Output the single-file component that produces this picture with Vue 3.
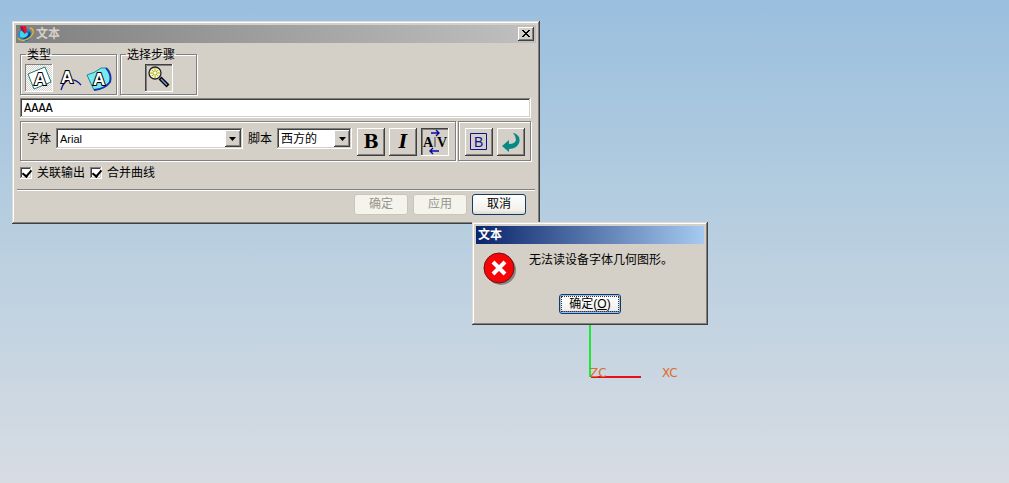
<script setup>
import { ref } from 'vue'

const content = ref('AAAA')
const font = ref('Arial')
const script = ref('西方的')
const associative = ref(true)
const joinCurves = ref(true)
</script>

<template>
  <main class="desktop">
    <svg class="axes" width="100" height="64" viewBox="0 0 100 64" aria-label="坐标轴">
      <path d="M2 0V56" stroke="#20e830" stroke-width="2" />
      <path d="M3 56H53" stroke="#e81018" stroke-width="2" />
      <text x="2" y="56">ZC</text>
      <text x="74" y="56">XC</text>
    </svg>

    <section class="window editor" aria-label="文本">
      <header class="titlebar inactive">
        <svg class="logo" width="18" height="16" viewBox="0 0 18 16" aria-hidden="true">
          <circle cx="8" cy="9" r="6.500" fill="#1686d8" />
          <path d="M3 6Q5 3 9 4L11 9Q8 13 3 11Z" fill="#39d8ea" />
          <path d="M4 13Q9 17 13 12Q15 8 12 5L11 9Q9 12 4 13Z" fill="#0746a8" />
          <path d="M3 0L9 0L10 6L8 8Z" fill="#e5142c" />
          <path d="M3 0L4 4L8 8L6 2Z" fill="#8d1644" />
          <path d="M13 2Q17 3 16 7Q14 12 8 14Q3 15 1 12" fill="none" stroke="#f1b622" stroke-width="1.3" />
        </svg>
        <h1>文本</h1>
        <button class="close" type="button" aria-label="关闭">
          <svg width="8" height="8" viewBox="0 0 8 8" shape-rendering="crispEdges"><path d="M0 0h2v1h1v1h2v-1h1v-1h2v1h-1v1h-1v1h-1v1h1v1h1v1h1v1h-2v-1h-1v-1h-2v1h-1v1h-2v-1h1v-1h1v-1h1v-1h-1v-1h-1v-1h-1z" fill="#000" /></svg>
        </button>
      </header>

      <div class="groups">
        <fieldset class="types">
          <legend>类型</legend>
          <button class="tool flat pressed" type="button" aria-label="平面文本">
            <svg width="26" height="26" viewBox="0 0 26 26">
              <path d="M2 9L19 2L25 17L8 24Z" fill="#fff" stroke="#187c78" />
              <text class="outlined" x="8" y="20">A</text>
            </svg>
          </button>
          <button class="tool flat" type="button" aria-label="曲线上文本">
            <svg width="26" height="26" viewBox="0 0 26 26">
              <path d="M5 25Q8 15 14 15Q20 14 25 20" fill="none" stroke="#14148c" stroke-width="1.3" />
              <text class="outlined" x="5" y="18">A</text>
            </svg>
          </button>
          <button class="tool flat" type="button" aria-label="面上文本">
            <svg width="28" height="26" viewBox="0 0 28 26">
              <path d="M2 10Q10 8 16 3L21 3Q27 9 25 17Q20 24 9 25Q6 19 2 10Z" fill="#78e9f0" stroke="#168a98" />
              <path d="M21 3Q27 9 25 17Q20 24 9 25" fill="none" stroke="#1538a8" stroke-width="2" />
              <text class="outlined" x="8" y="20">A</text>
            </svg>
          </button>
        </fieldset>

        <fieldset class="steps">
          <legend>选择步骤</legend>
          <button class="tool flat pressed plain" type="button" aria-label="选择">
            <svg width="26" height="26" viewBox="0 0 26 26">
              <path d="M14 13L22 21" stroke="#000" stroke-width="4" />
              <path d="M15 14L21 20" stroke="#7d92dc" stroke-width="1.500" />
              <circle cx="9" cy="8" r="6" fill="#f4f3c4" stroke="#222" stroke-width="1.3" />
              <path d="M9 3V13M4 8H14M6 5L12 11M12 5L6 11" stroke="#b9b32e" />
              <path d="M8 7h2v2h-2z" fill="#fff" />
            </svg>
          </button>
        </fieldset>
      </div>

      <input v-model="content" class="content sunken" type="text" aria-label="文本内容">

      <div class="format">
        <div class="panel options">
          <label for="font">字体</label>
          <div class="combo font-combo sunken">
            <select id="font" v-model="font"><option>Arial</option></select>
            <span class="arrow" aria-hidden="true"><svg width="7" height="4" viewBox="0 0 7 4"><path d="M0 0h7L3.5 4z" /></svg></span>
          </div>
          <label for="script">脚本</label>
          <div class="combo script-combo sunken">
            <select id="script" v-model="script"><option>西方的</option></select>
            <span class="arrow" aria-hidden="true"><svg width="7" height="4" viewBox="0 0 7 4"><path d="M0 0h7L3.5 4z" /></svg></span>
          </div>
          <div class="tools">
            <button class="tool letter" type="button" aria-label="粗体">B</button>
            <button class="tool letter italic" type="button" aria-label="斜体">I</button>
            <button class="tool pressed" type="button" aria-label="字距">
              <svg width="26" height="26" viewBox="0 0 26 26">
                <path d="M9 4H17M14 1L17 4L14 7M17 22H8M11 19L8 22L11 25" fill="none" stroke="#0808a0" stroke-width="1.4" />
                <path d="M13 8V18" stroke="#888" stroke-width="2" />
                <text class="kern" x="1" y="18">A</text>
                <text class="kern" x="15" y="18">V</text>
              </svg>
            </button>
          </div>
        </div>
        <div class="panel tools extra">
          <button class="tool" type="button" aria-label="文本框">
            <svg width="26" height="26" viewBox="0 0 26 26">
              <path d="M4.500 4.500H20.500V20.500H4.500Z" fill="none" stroke="#10108c" />
              <text class="boxed" x="8" y="18">B</text>
            </svg>
          </button>
          <button class="tool" type="button" aria-label="重置">
            <svg width="26" height="26" viewBox="0 0 26 26">
              <path d="M15 4Q18 4 21 8Q23 14 18 18Q15 20 11 20V23L4 17L11 11V15Q17 15 18 11Q18 7 15 4Z" fill="#078985" />
            </svg>
          </button>
        </div>
      </div>

      <div class="checks">
        <label><input v-model="associative" type="checkbox"><span>关联输出</span></label>
        <label><input v-model="joinCurves" type="checkbox"><span>合并曲线</span></label>
      </div>

      <footer class="actions">
        <button class="push" type="button" disabled>确定</button>
        <button class="push" type="button" disabled>应用</button>
        <button class="push" type="button">取消</button>
      </footer>
    </section>

    <section class="window alert" role="alertdialog" aria-label="文本" aria-describedby="message">
      <header class="titlebar active"><h2>文本</h2></header>
      <div class="message">
        <svg width="34" height="34" viewBox="0 0 34 34" aria-hidden="true">
          <circle cx="18" cy="18" r="15" fill="#858585" />
          <circle cx="16" cy="16" r="15" fill="#f50505" stroke="#751010" />
          <path d="M10 10L22 22M22 10L10 22" stroke="#fff" stroke-width="4" />
        </svg>
        <p id="message">无法读设备字体几何图形。</p>
      </div>
      <button class="push focused" type="button"><span>确定(<u>O</u>)</span></button>
    </section>
  </main>
</template>

<style>
body {
  margin: 0;
}
</style>

<style scoped>
* {
  box-sizing: border-box;
}

.desktop {
  position: relative;
  min-height: 100vh;
  overflow: hidden;
  background: linear-gradient(#9abfde, #b9cfe0 50%, #d7dce3);
  color: #000;
  font: 12px/16px "Liberation Sans", "Noto Sans CJK SC", sans-serif;
}

button,
input,
select {
  margin: 0;
  color: inherit;
  font: inherit;
}

svg {
  display: block;
  flex: none;
}

.axes {
  position: absolute;
  top: 321px;
  left: 588px;
}

.axes text {
  fill: #df6a2a;
  font: 12px "DejaVu Sans", sans-serif;
}

.window {
  position: absolute;
  padding: 4px;
  background: #d4d0c8;
  box-shadow: inset -1px -1px #404040, inset 1px 1px #dfdcd5, inset -2px -2px #808080, inset 2px 2px #fff;
}

.editor {
  top: 21px;
  left: 12px;
  width: 528px;
}

.alert {
  top: 222px;
  left: 472px;
  width: 236px;
  padding-bottom: 11px;
}

.titlebar {
  display: flex;
  align-items: center;
  height: 18px;
  padding: 0 2px 0 1px;
}

.titlebar h1,
.titlebar h2 {
  flex: 1;
  margin: 0;
  font-size: 12px;
  line-height: 18px;
}

.inactive {
  gap: 1px;
  background: linear-gradient(90deg, #808080, #c0c0c0);
  color: #d4d0c8;
}

.active {
  padding-left: 2px;
  background: linear-gradient(90deg, #0a246a, #a6caf0);
  color: #fff;
}

.close {
  display: grid;
  place-items: center;
  width: 16px;
  height: 14px;
  padding: 0 1px 1px 0;
  border: 0;
  background: #d4d0c8;
  box-shadow: inset -1px -1px #404040, inset 1px 1px #fff, inset -2px -2px #808080;
}

.groups {
  display: flex;
  gap: 3px;
  padding: 3px 4px 0;
}

fieldset {
  display: flex;
  min-width: 0;
  height: 49px;
  margin: 0;
  padding: 2px 4px 0;
  border: 1px solid #808080;
  box-shadow: 1px 1px #fff, inset 1px 1px #fff;
}

legend {
  margin-left: 1px;
  padding: 2px 1px 0;
  line-height: 14px;
}

.types {
  gap: 2px;
  width: 97px;
}

.steps {
  justify-content: center;
  width: 77px;
}

.tool {
  display: grid;
  flex: none;
  place-items: center;
  width: 28px;
  height: 28px;
  padding: 0;
  border: 0;
  background: #d4d0c8;
  box-shadow: inset -1px -1px #404040, inset 1px 1px #fff, inset -2px -2px #808080;
}

.tool.flat {
  box-shadow: none;
}

.tool.pressed {
  background: repeating-conic-gradient(#fff 0 25%, #d4d0c8 0 50%) 0 0 / 2px 2px;
  box-shadow: inset -1px -1px #fff, inset 1px 1px #808080;
}

.tool.plain,
.tools .tool.pressed {
  background: #d4d0c8;
}

.tool.plain,
.tools .tool.pressed {
  box-shadow: inset -1px -1px #fff, inset 1px 1px #404040, inset 2px 2px #808080;
}

.outlined {
  fill: #fff;
  stroke: #000;
  stroke-width: 2px;
  paint-order: stroke;
  font: bold 17px "Liberation Sans", sans-serif;
}

.letter {
  font: bold 18px/26px "DejaVu Serif", serif;
}

.italic {
  font-style: italic;
}

.kern {
  font: bold 14px "Liberation Serif", serif;
}

.boxed {
  fill: #10108c;
  font: 14px "Liberation Sans", sans-serif;
}

.sunken {
  border: 0;
  background: #fff;
  box-shadow: inset -1px -1px #fff, inset 1px 1px #808080, inset -2px -2px #d4d0c8, inset 2px 2px #404040;
}

.content {
  display: block;
  width: calc(100% - 9px);
  height: 20px;
  margin: 3px 4px;
  padding: 4px 4px 2px;
  font-family: "Liberation Mono", "Noto Sans CJK SC", monospace;
}

.format {
  display: flex;
  gap: 2px;
  padding: 0 5px 0 4px;
}

.panel {
  display: flex;
  height: 40px;
  border: 1px solid #808080;
  box-shadow: 1px 1px #fff, inset 1px 1px #fff;
}

.options {
  flex: 1;
  gap: 5px;
  padding: 6px;
}

.options label {
  line-height: 22px;
}

.combo {
  display: flex;
  height: 21px;
  padding: 2px;
}

.font-combo {
  flex: 1;
}

.font-combo select {
  font-size: 11px;
}

.script-combo {
  width: 75px;
}

.combo select {
  flex: 1;
  min-width: 0;
  padding: 0 2px;
  border: 0;
  outline: 0;
  appearance: none;
  background: transparent;
}

.arrow {
  display: grid;
  flex: none;
  place-items: center;
  width: 16px;
  background: #d4d0c8;
  box-shadow: inset -1px -1px #404040, inset 1px 1px #fff, inset -2px -2px #808080;
  pointer-events: none;
}

.tools {
  display: flex;
  gap: 4px;
}

.extra {
  padding: 6px 5px 6px 6px;
}

.checks {
  display: flex;
  gap: 5px;
  padding: 4px 4px 0;
}

.checks label {
  display: flex;
  align-items: center;
  gap: 5px;
}

.checks input {
  width: 12px;
  height: 12px;
  appearance: none;
  background: #fff;
  box-shadow: inset -1px -1px #fff, inset 1px 1px #808080, inset -2px -2px #d4d0c8, inset 2px 2px #404040;
}

.checks input:checked::before {
  display: block;
  width: 4px;
  height: 7px;
  margin: 1px 0 0 4px;
  border: solid #000;
  border-width: 0 2px 2px 0;
  content: "";
  transform: rotate(40deg);
}

.actions {
  display: flex;
  justify-content: flex-end;
  gap: 5px;
  margin: 8px 1px 0;
  padding: 4px 9px 5px 0;
  border-top: 1px solid #808080;
  box-shadow: inset 0 1px #fff;
}

.push {
  width: 54px;
  height: 21px;
  padding: 0;
  border: 1px solid #123c66;
  border-radius: 3px;
  background: linear-gradient(#fff, #f2f1eb 80%, #dcd8ce);
  line-height: 19px;
}

.push:disabled {
  border-color: #c9c7ba;
  background: #f4f3ec;
  color: #96958c;
}

.message {
  display: flex;
  gap: 12px;
  padding: 8px 7px 0;
}

.message p {
  margin: 0;
}

.focused {
  display: block;
  width: 62px;
  height: 20px;
  margin: 8px auto 0;
  padding: 1px;
  box-shadow: inset 0 0 0 1px #9dbbea, inset 0 -2px #6987d0;
}

.focused span {
  display: block;
  height: 16px;
  border: 1px dotted #333;
  line-height: 15px;
}
</style>
